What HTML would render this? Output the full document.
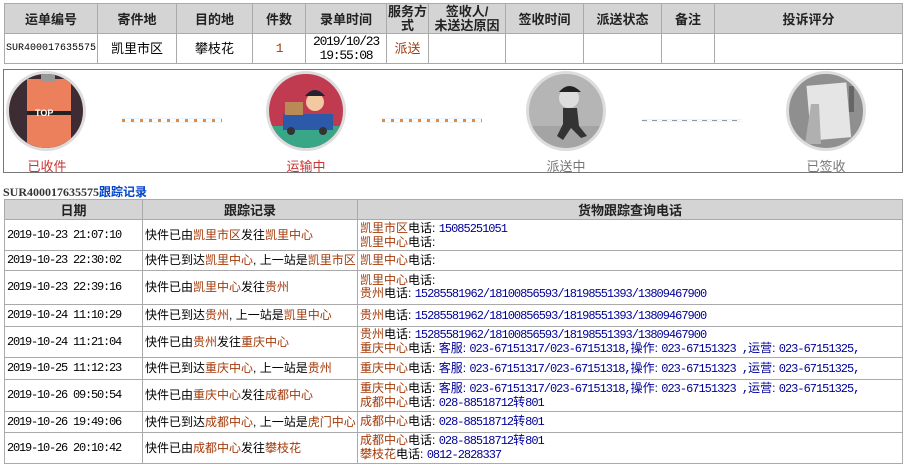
<!DOCTYPE html>
<html><head><meta charset="utf-8"><style>
*{margin:0;padding:0;box-sizing:border-box}
body{width:906px;height:464px;background:#fff;font-family:"Liberation Sans","Noto Sans CJK SC",sans-serif;font-size:12px;color:#000;position:relative;overflow:hidden}
table{border-collapse:collapse;position:absolute;table-layout:fixed}
td,th{border:1px solid #aaa;padding:0;overflow:hidden;white-space:nowrap}
th{background:#d4d4d4;font-weight:bold;font-size:13px;color:#222}
.n{font-family:"Liberation Mono",monospace;font-size:12px;letter-spacing:-1.2px}
.b{color:#a33a0a}
.u{color:#000099;font-family:"Liberation Mono",monospace;font-size:12px;letter-spacing:-1px}
.u2{color:#000099}
#t1 td{text-align:center;font-size:13px;line-height:14px}
#t2 td{padding-left:2px;line-height:13px}
#t2 th{height:20px}
.box{position:absolute;left:3px;top:69px;width:900px;height:104px;border:1px solid #777}
.c{position:absolute;width:80px;height:80px;border-radius:50%;border:3px solid #ddd;overflow:hidden;top:1px}
.lab{position:absolute;top:86px;font-size:13px;width:80px;text-align:center}
.dots{position:absolute;top:48px;height:5px;width:100px;background:repeating-linear-gradient(90deg,#e48a3a 0 3px,transparent 3px 9px);border-top:1px solid #eef3f8;border-bottom:1px solid #eef3f8}
</style></head><body>
<table id="t1" style="left:4px;top:3px;width:899px">
<colgroup><col style="width:93px"><col style="width:79px"><col style="width:76px"><col style="width:53px"><col style="width:81px"><col style="width:42px"><col style="width:77px"><col style="width:78px"><col style="width:78px"><col style="width:53px"><col></colgroup>
<tr style="height:30px"><th>运单编号</th><th>寄件地</th><th>目的地</th><th>件数</th><th>录单时间</th><th style="line-height:14px">服务方<br>式</th><th style="line-height:14px">签收人/<br>未送达原因</th><th>签收时间</th><th>派送状态</th><th>备注</th><th>投诉评分</th></tr>
<tr style="height:30px"><td style="text-align:left;font-family:'Liberation Mono',monospace;font-size:10px;letter-spacing:0;padding-left:1px">SUR400017635575</td><td>凯里市区</td><td>攀枝花</td><td class="b n">1</td><td class="n">2019/10/23<br>19:55:08</td><td class="b">派送</td><td></td><td></td><td></td><td></td><td></td></tr>
</table>
<div class="box">
<div class="c" style="left:2px;background:#3e2c35"><svg width="80" height="80"><rect x="18" y="5" width="44" height="70" fill="#ec7f5c"/><rect x="32" y="0" width="14" height="8" fill="#999"/><rect x="18" y="37" width="44" height="4" fill="#222"/><text x="26" y="42" font-size="9" fill="#fff" font-weight="bold" font-family="Liberation Sans">TOP</text></svg></div>
<div class="lab" style="left:3px;color:#c33">已收件</div>
<div class="dots" style="left:118px"></div>
<div class="c" style="left:262px;background:#c03a50"><svg width="80" height="80"><rect x="0" y="52" width="80" height="28" fill="#3aa688"/><rect x="14" y="40" width="50" height="16" fill="#2d5aa8"/><rect x="16" y="28" width="18" height="13" fill="#b98a55"/><circle cx="46" cy="28" r="9" fill="#f2c9a0"/><path d="M36 22 Q46 10 56 22Z" fill="#223"/><circle cx="22" cy="57" r="4" fill="#333"/><circle cx="54" cy="57" r="4" fill="#333"/></svg></div>
<div class="lab" style="left:262px;color:#c33">运输中</div>
<div class="dots" style="left:378px"></div>
<div class="c" style="left:522px;background:#b5b5b5"><svg width="80" height="80"><rect x="0" y="52" width="80" height="28" fill="#a4a4a4"/><circle cx="40" cy="24" r="10" fill="#ddd"/><path d="M30 18 Q40 6 52 18Z" fill="#222"/><path d="M34 34 L48 34 L50 52 L58 62 L52 64 L42 54 L34 66 L28 62 L34 50Z" fill="#333"/></svg></div>
<div class="lab" style="left:522px;color:#777">派送中</div>
<div class="dots" style="left:638px;background:repeating-linear-gradient(90deg,#8a9aae 0 5px,transparent 5px 10px);height:3px;top:49px"></div>
<div class="c" style="left:782px;background:#8f8f8f"><svg width="80" height="80"><rect x="20" y="10" width="40" height="55" fill="#e5e5e5" transform="rotate(-5 40 40)"/><path d="M22 30 L30 30 L32 70 L16 70Z" fill="#b0b0b0"/><rect x="60" y="12" width="5" height="26" fill="#666"/></svg></div>
<div class="lab" style="left:782px;color:#777">已签收</div>
</div>
<div style="position:absolute;left:3px;top:183px;font-weight:bold;font-size:12px"><span style="font-family:'Liberation Serif',serif;color:#333">SUR400017635575</span><span style="color:#0044cc">跟踪记录</span></div>
<table id="t2" style="left:4px;top:199px;width:899px">
<colgroup><col style="width:138px"><col style="width:215px"><col></colgroup>
<tr><th>日期</th><th>跟踪记录</th><th>货物跟踪查询电话</th></tr>
<tr style="height:31px"><td class="n">2019-10-23 21:07:10</td><td>快件已由<span class="b">凯里市区</span>发往<span class="b">凯里中心</span></td><td><span class="b">凯里市区</span>电话: <span class="u">15085251051</span><br><span class="b">凯里中心</span>电话:</td></tr>
<tr style="height:20px"><td class="n">2019-10-23 22:30:02</td><td>快件已到达<span class="b">凯里中心</span>, 上一站是<span class="b">凯里市区</span></td><td><span class="b">凯里中心</span>电话:</td></tr>
<tr style="height:34px"><td class="n">2019-10-23 22:39:16</td><td>快件已由<span class="b">凯里中心</span>发往<span class="b">贵州</span></td><td><span class="b">凯里中心</span>电话:<br><span class="b">贵州</span>电话: <span class="u">15285581962/18100856593/18198551393/13809467900</span></td></tr>
<tr style="height:22px"><td class="n">2019-10-24 11:10:29</td><td>快件已到达<span class="b">贵州</span>, 上一站是<span class="b">凯里中心</span></td><td><span class="b">贵州</span>电话: <span class="u">15285581962/18100856593/18198551393/13809467900</span></td></tr>
<tr style="height:31px"><td class="n">2019-10-24 11:21:04</td><td>快件已由<span class="b">贵州</span>发往<span class="b">重庆中心</span></td><td><span class="b">贵州</span>电话: <span class="u">15285581962/18100856593/18198551393/13809467900</span><br><span class="b">重庆中心</span>电话: <span class="u2">客服: </span><span class="u">023-67151317/023-67151318,</span><span class="u2">操作: </span><span class="u">023-67151323 ,</span><span class="u2">运营: </span><span class="u">023-67151325,</span></td></tr>
<tr style="height:22px"><td class="n">2019-10-25 11:12:23</td><td>快件已到达<span class="b">重庆中心</span>, 上一站是<span class="b">贵州</span></td><td><span class="b">重庆中心</span>电话: <span class="u2">客服: </span><span class="u">023-67151317/023-67151318,</span><span class="u2">操作: </span><span class="u">023-67151323 ,</span><span class="u2">运营: </span><span class="u">023-67151325,</span></td></tr>
<tr style="height:32px"><td class="n">2019-10-26 09:50:54</td><td>快件已由<span class="b">重庆中心</span>发往<span class="b">成都中心</span></td><td><span class="b">重庆中心</span>电话: <span class="u2">客服: </span><span class="u">023-67151317/023-67151318,</span><span class="u2">操作: </span><span class="u">023-67151323 ,</span><span class="u2">运营: </span><span class="u">023-67151325,</span><br><span class="b">成都中心</span>电话: <span class="u">028-88518712</span><span class="u2">转</span><span class="u">801</span></td></tr>
<tr style="height:21px"><td class="n">2019-10-26 19:49:06</td><td>快件已到达<span class="b">成都中心</span>, 上一站是<span class="b">虎门中心</span></td><td><span class="b">成都中心</span>电话: <span class="u">028-88518712</span><span class="u2">转</span><span class="u">801</span></td></tr>
<tr style="height:31px"><td class="n">2019-10-26 20:10:42</td><td>快件已由<span class="b">成都中心</span>发往<span class="b">攀枝花</span></td><td><span class="b">成都中心</span>电话: <span class="u">028-88518712</span><span class="u2">转</span><span class="u">801</span><br><span class="b">攀枝花</span>电话: <span class="u">0812-2828337</span></td></tr>
</table>
</body></html>
